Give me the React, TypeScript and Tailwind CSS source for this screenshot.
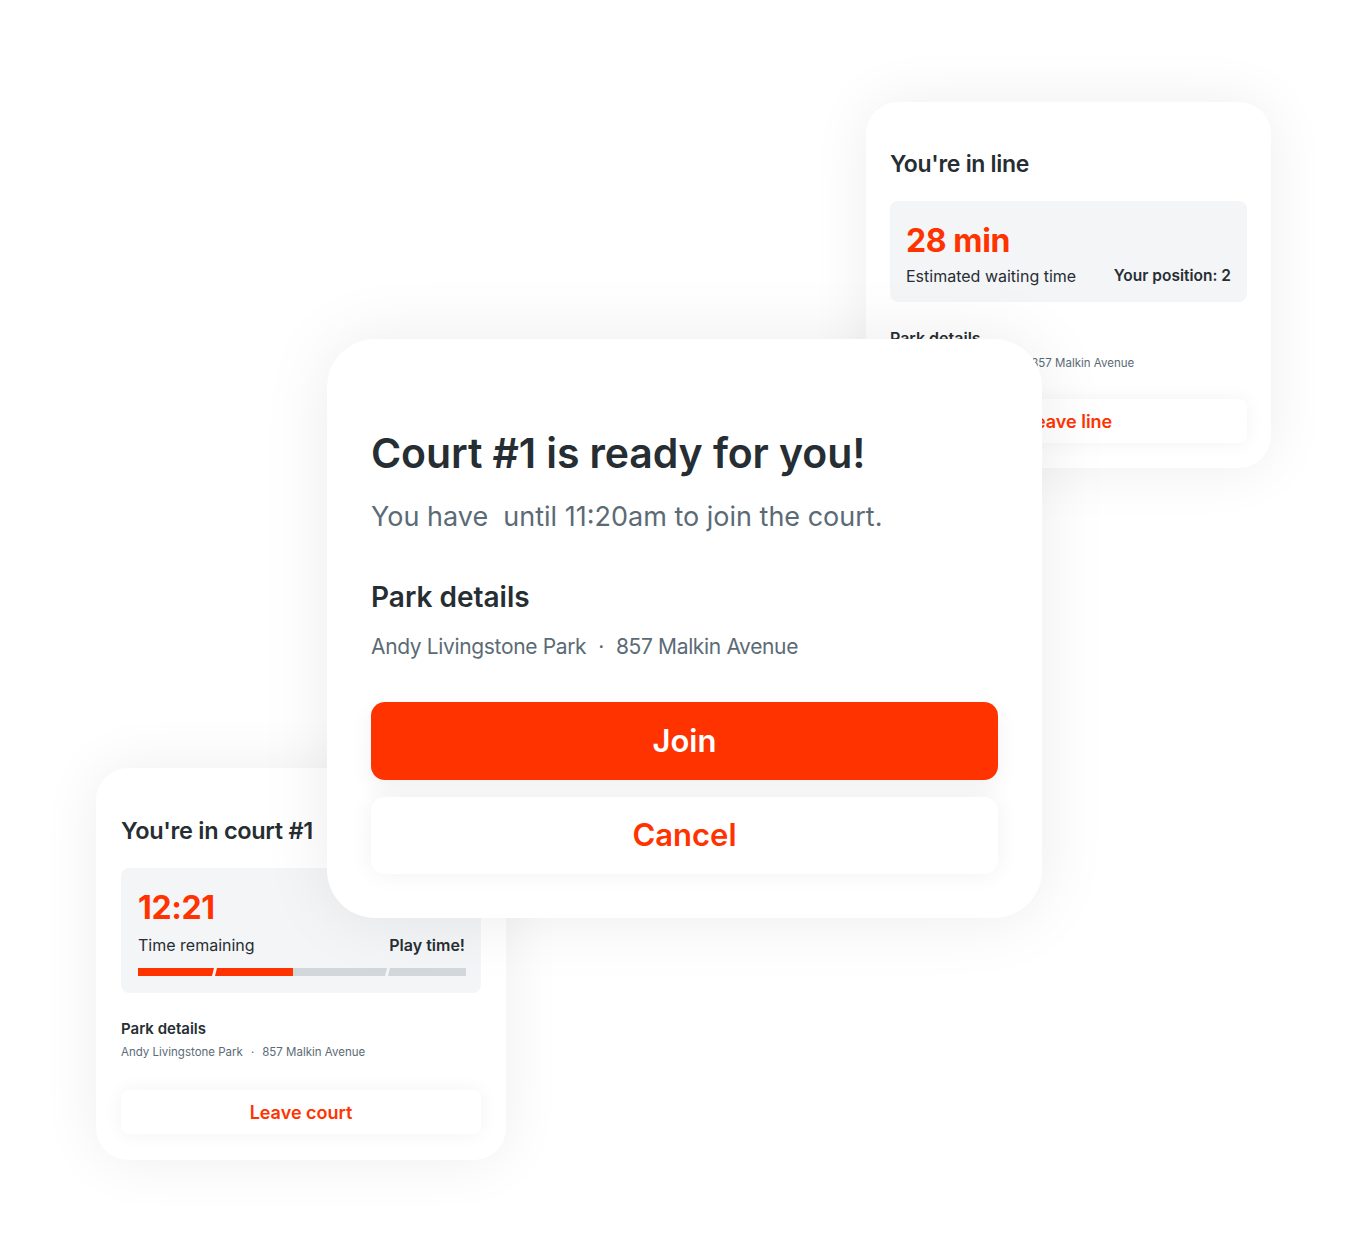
import React from "react";

function ProgressBar() {
  return (
    <svg width="328" height="8" viewBox="0 0 328 8" className="block">
      <polygon points="0,0 76,0 74,8 0,8" fill="#ff3300" />
      <polygon points="79,0 155,0 155,8 77,8" fill="#ff3300" />
      <polygon points="155,0 249,0 247,8 155,8" fill="#d1d7db" />
      <polygon points="252,0 328,0 328,8 250,8" fill="#d1d7db" />
    </svg>
  );
}

export default function App() {
  return (
    <div
      className="relative w-[1368px] h-[1257px] bg-white overflow-hidden text-[#262e33]"
      style={{ fontFamily: "Inter, 'Noto Sans', sans-serif" }}
    >
      {/* Top-right card: in line */}
      <div className="absolute left-[866px] top-[102px] w-[405px] h-[366px] rounded-[32px] bg-white shadow-[0_0_60px_rgba(0,0,0,0.07)] px-6 pt-[46px] flex flex-col">
        <h2 className="text-[23px] leading-8 font-semibold tracking-[-0.3px]">You're in line</h2>
        <div className="mt-[21px] rounded-lg bg-[#f4f5f7] px-4 pt-5 pb-[14px]">
          <div className="text-[32px] leading-10 font-bold tracking-[-0.4px] text-[#ff3300]">28 min</div>
          <div className="mt-[3px] flex items-center justify-between leading-6">
            <span className="text-[16px]">Estimated waiting time</span>
            <span className="text-[15.5px] font-semibold">Your position: 2</span>
          </div>
        </div>
        <div className="mt-[24px] text-[16px] leading-6 font-semibold">Park details</div>
        <div className="mt-[5px] flex items-center gap-2 text-[11.5px] leading-4 text-[#5b6b76]">
          <span>Andy Livingstone Park</span>
          <span>·</span>
          <span>857 Malkin Avenue</span>
        </div>
        <div className="mt-[28px] h-[44px] rounded-lg bg-white shadow-[0_0_20px_rgba(0,0,0,0.05)] flex items-center justify-center text-[18px] font-semibold text-[#ff3300]">
          Leave line
        </div>
      </div>

      {/* Bottom-left card: in court */}
      <div className="absolute left-[96px] top-[768px] w-[410px] h-[392px] rounded-[32px] bg-white shadow-[0_0_60px_rgba(0,0,0,0.07)] px-[25px] pt-[47px] flex flex-col">
        <h2 className="text-[23.5px] leading-8 font-semibold tracking-[-0.3px]">You're in court #1</h2>
        <div className="mt-[21px] rounded-lg bg-[#f4f5f7] pl-[17px] pr-[16px] pt-5 pb-[17px]">
          <div className="text-[32px] leading-10 font-bold tracking-[-0.4px] text-[#ff3300]">12:21</div>
          <div className="mt-[5px] flex items-center justify-between text-[16px] leading-6">
            <span>Time remaining</span>
            <span className="font-semibold">Play time!</span>
          </div>
          <div className="mt-[11px]">
            <ProgressBar />
          </div>
        </div>
        <div className="mt-[24px] text-[15px] leading-6 font-semibold">Park details</div>
        <div className="mt-[3px] flex items-center gap-2 text-[11.5px] leading-4 text-[#5b6b76]">
          <span>Andy Livingstone Park</span>
          <span>·</span>
          <span>857 Malkin Avenue</span>
        </div>
        <div className="mt-[30px] h-[44px] rounded-lg bg-white shadow-[0_0_20px_rgba(0,0,0,0.05)] flex items-center justify-center text-[18px] font-semibold text-[#ff3300]">
          Leave court
        </div>
      </div>

      {/* Main card */}
      <div className="absolute left-[327px] top-[339px] w-[715px] h-[579px] rounded-[48px] bg-white shadow-[0_0_70px_rgba(0,0,0,0.08)] px-[44px] pt-[90px] flex flex-col">
        <h1 className="text-[41px] leading-[48px] font-semibold tracking-[-0.1px]">Court #1 is ready for you!</h1>
        <p className="mt-[22px] text-[27px] leading-9 text-[#5b6b76]">
          You have&nbsp; until 11:20am to join the court.
        </p>
        <h3 className="mt-[44px] text-[28px] leading-9 font-semibold">Park details</h3>
        <div className="mt-[17px] flex items-center gap-3 text-[21px] leading-[30px] text-[#5b6b76] tracking-[-0.35px]">
          <span>Andy Livingstone Park</span>
          <span>·</span>
          <span>857 Malkin Avenue</span>
        </div>
        <button className="mt-[40px] h-[78px] rounded-[14px] bg-[#ff3300] text-white text-[31px] font-semibold shadow-[0_8px_24px_rgba(0,0,0,0.06)]">
          Join
        </button>
        <button className="mt-[17px] h-[77px] rounded-[14px] bg-white text-[#ff3300] text-[31px] font-semibold shadow-[0_0_24px_rgba(0,0,0,0.06)]">
          Cancel
        </button>
      </div>
    </div>
  );
}
